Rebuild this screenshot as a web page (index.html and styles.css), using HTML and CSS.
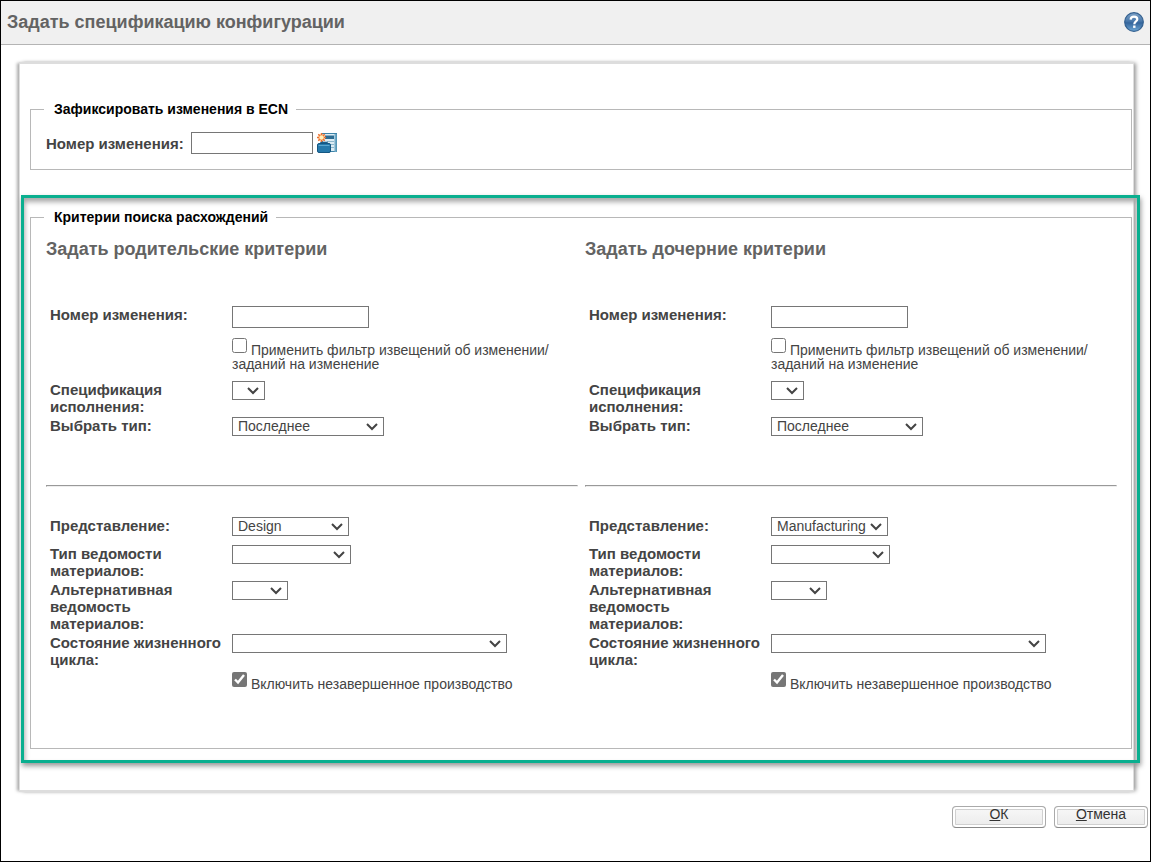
FILE: index.html
```html
<!DOCTYPE html>
<html lang="ru">
<head>
<meta charset="utf-8">
<title>Задать спецификацию конфигурации</title>
<link rel="stylesheet" href="styles.css">
</head>
<body>
<div class="dialog">
  <header class="titlebar">
    <h1 class="title">Задать спецификацию конфигурации</h1>
    <button class="icon-button" type="button" aria-label="Справка">
      <svg width="20" height="20" viewBox="0 0 20 20">
        <defs>
          <linearGradient id="ball" x1="0" y1="0" x2="0" y2="1">
            <stop offset="0" stop-color="#7fa3c8"/><stop offset=".45" stop-color="#4a79ab"/><stop offset=".55" stop-color="#34659c"/><stop offset="1" stop-color="#6fa8d6"/>
          </linearGradient>
        </defs>
        <circle cx="10" cy="10" r="9.3" fill="url(#ball)" stroke="#34608f" stroke-width="1.2"/>
        <path d="M6.6 7.6C6.7 5.500 8 4.700 10 4.700C12 4.700 13.300 5.700 13.300 7.300C13.300 9.500 10.300 9.300 10.300 12.200" fill="none" stroke="#fff" stroke-width="2.200"/>
        <rect x="9.100" y="13.500" width="2.400" height="2.400" fill="#fff"/>
      </svg>
    </button>
  </header>

  <main class="panel">
    <fieldset class="group group-ecn">
      <legend class="legend">Зафиксировать изменения в ECN</legend>
      <div class="ecn-row">
        <label class="label" for="ecn">Номер изменения:</label>
        <input class="text-box ecn-box" id="ecn" type="text">
        <button class="icon-button" type="button" aria-label="Создать извещение">
          <svg width="20" height="20" viewBox="0 0 20 20">
            <rect x="5.500" y="0.500" width="14" height="18" fill="#dcecf4" stroke="#3d83a8"/>
            <path d="M18.500 1v18" stroke="#6fa9c6" stroke-width="2"/>
            <rect x="8" y="2.500" width="9" height="3.500" fill="#2d6c92"/>
            <path d="M10 8.500h7M13 11.500h4M14 14.500h3" stroke="#8db7cc"/>
            <path d="M4 11V9.500h6V11" fill="none" stroke="#1c5f8c" stroke-width="1.500"/>
            <rect x="0.500" y="10.500" width="13" height="9" rx="1.500" fill="#2679ab" stroke="#155782"/>
            <path d="M1.500 12.500h11" stroke="#5ba6cf"/>
            <circle cx="4.500" cy="4.500" r="3.500" fill="#fbd2a8"/>
            <path d="M4.500 0v9M0 4.500h9M1.300 1.300l6.400 6.400M7.700 1.300L1.300 7.700" stroke="#ee6f2d" stroke-width="1.500"/>
            <circle cx="4.500" cy="4.500" r="2.200" fill="#fff0bc"/>
          </svg>
        </button>
      </div>
    </fieldset>

    <section class="highlight">
      <fieldset class="group group-criteria">
        <legend class="legend">Критерии поиска расхождений</legend>
        <div class="columns">
          <section class="column">
            <h2 class="heading">Задать родительские критерии</h2>
            <div class="fields fields-top">
              <label class="label" for="p-num">Номер изменения:</label>
              <div class="value"><input class="text-box" id="p-num" type="text"></div>
              <label class="check check-filter"><input class="tick" type="checkbox"> Применить фильтр извещений об изменении/<wbr>заданий на изменение</label>
              <label class="label" for="p-spec">Спецификация исполнения:</label>
              <div class="value"><select class="drop drop-xs" id="p-spec"><option></option></select></div>
              <label class="label" for="p-type">Выбрать тип:</label>
              <div class="value"><select class="drop drop-m" id="p-type"><option>Последнее</option></select></div>
            </div>
            <hr class="rule">
            <div class="fields">
              <label class="label label-view" for="p-view">Представление:</label>
              <div class="value"><select class="drop drop-view" id="p-view"><option>Design</option></select></div>
              <label class="label" for="p-bom">Тип ведомости материалов:</label>
              <div class="value"><select class="drop drop-s" id="p-bom"><option></option></select></div>
              <label class="label" for="p-alt">Альтернативная ведомость материалов:</label>
              <div class="value"><select class="drop drop-alt" id="p-alt"><option></option></select></div>
              <label class="label" for="p-state">Состояние жизненного цикла:</label>
              <div class="value"><select class="drop drop-l" id="p-state"><option></option></select></div>
              <label class="check"><input class="tick" type="checkbox" checked> Включить незавершенное производство</label>
            </div>
          </section>

          <section class="column">
            <h2 class="heading">Задать дочерние критерии</h2>
            <div class="fields fields-top">
              <label class="label" for="c-num">Номер изменения:</label>
              <div class="value"><input class="text-box" id="c-num" type="text"></div>
              <label class="check check-filter"><input class="tick" type="checkbox"> Применить фильтр извещений об изменении/<wbr>заданий на изменение</label>
              <label class="label" for="c-spec">Спецификация исполнения:</label>
              <div class="value"><select class="drop drop-xs" id="c-spec"><option></option></select></div>
              <label class="label" for="c-type">Выбрать тип:</label>
              <div class="value"><select class="drop drop-m" id="c-type"><option>Последнее</option></select></div>
            </div>
            <hr class="rule">
            <div class="fields">
              <label class="label label-view" for="c-view">Представление:</label>
              <div class="value"><select class="drop drop-view" id="c-view"><option>Manufacturing</option></select></div>
              <label class="label" for="c-bom">Тип ведомости материалов:</label>
              <div class="value"><select class="drop drop-s" id="c-bom"><option></option></select></div>
              <label class="label" for="c-alt">Альтернативная ведомость материалов:</label>
              <div class="value"><select class="drop drop-alt" id="c-alt"><option></option></select></div>
              <label class="label" for="c-state">Состояние жизненного цикла:</label>
              <div class="value"><select class="drop drop-l" id="c-state"><option></option></select></div>
              <label class="check"><input class="tick" type="checkbox" checked> Включить незавершенное производство</label>
            </div>
          </section>
        </div>
      </fieldset>
    </section>
  </main>

  <footer class="actions">
    <button class="push" type="button"><u>О</u>К</button>
    <button class="push" type="button"><u>О</u>тмена</button>
  </footer>
</div>
</body>
</html>
```

FILE: styles.css
```css
* { box-sizing: border-box; }

body {
  margin: 0;
  background: #fff;
  color: #444;
  font: 14px/14px "Liberation Sans", Arial, sans-serif;
}

.dialog {
  display: flex;
  flex-direction: column;
  min-height: 100vh;
  border: 1px solid #000;
}

.titlebar {
  display: flex;
  justify-content: space-between;
  align-items: center;
  padding: 11px 6px 12px;
  background: #f0f0f0;
  border-bottom: 1px solid #b4b4b4;
}

.title,
.heading {
  margin: 0;
  color: #636363;
  font-size: 18px;
  font-weight: bold;
  line-height: 20px;
}

.icon-button {
  display: block;
  padding: 0;
  border: 0;
  background: none;
}

.icon-button svg { display: block; }

.panel {
  margin: 17px 16px 0 18px;
  padding: 37px 0 27px;
  border: 2px solid #ddd;
  border-width: 2px 1px;
  box-shadow: -3px 0 3px -1px #aaa, 3px 0 4px -1px #999;
}

.group {
  min-width: 0;
  margin: 0;
  border: 1px solid #b8b8b8;
}

.group-ecn {
  margin: 0 1px 25px 10px;
  padding: 15px;
}

.legend {
  margin-left: -2px;
  padding: 0 8px 0 10px;
  color: #000;
  font-weight: bold;
  line-height: 16px;
}

.ecn-row {
  display: flex;
  align-items: center;
  gap: 4px;
}

.ecn-row .label { margin-right: 3px; }

.label {
  font-size: 15px;
  font-weight: bold;
  line-height: 17px;
}

.text-box {
  width: 137px;
  height: 22px;
  padding: 1px 4px;
  border: 1px solid #767676;
  background: #fff;
  color: inherit;
  font: inherit;
}

.ecn-box { width: 122px; }

.highlight {
  margin: 0 -7px 0 1px;
  padding: 11px 5px 11px 6px;
  border: 3px solid #0aaf8f;
  box-shadow: 1px 3px 5px #999, inset 1px 4px 5px #aaa;
}

.group-criteria { padding: 14px 14px 36px 15px; }

.columns {
  display: grid;
  grid-template-columns: 1fr 1fr;
  gap: 7px;
}

.fields {
  display: grid;
  grid-template-columns: 174px 1fr;
  align-items: start;
  gap: 2px 8px;
  padding-left: 4px;
}

.fields-top { padding-top: 47px; }

.label-view { min-height: 26px; }

.value { display: flex; }

.check {
  grid-column: 2;
  max-width: 320px;
  min-height: 42px;
  padding-top: 2px;
}

.check-filter {
  min-height: 49px;
  padding-top: 8px;
}

.tick {
  width: 15px;
  height: 15px;
  margin: 0;
  vertical-align: 2px;
  accent-color: #767676;
}

.drop {
  height: 19px;
  padding: 0 20px 1px 5px;
  border: 1px solid #767676;
  border-radius: 0;
  appearance: none;
  background: #fff url("data:image/svg+xml,%3Csvg xmlns='http://www.w3.org/2000/svg' width='12' height='8'%3E%3Cpath d='M1 1l5 5 5-5' fill='none' stroke='%23444' stroke-width='2'/%3E%3C/svg%3E") no-repeat right 5px center;
  color: inherit;
  font: inherit;
  line-height: 16px;
}

.drop-xs { width: 33px; }
.drop-alt { width: 56px; }
.drop-view { width: 117px; }
.drop-s { width: 119px; }
.drop-m { width: 152px; }
.drop-l { width: 275px; }

.rule {
  margin: 49px 0 30px;
  border: 1px solid;
  border-color: #999 #eee #eee #999;
}

.actions {
  display: flex;
  justify-content: flex-end;
  gap: 8px;
  padding: 14px 2px 0;
}

.push {
  width: 94px;
  height: 22px;
  padding: 0 0 6px;
  border: 1px solid #aaa;
  border-bottom-color: #888;
  border-radius: 4px;
  background: linear-gradient(#f8f8f8, #ebebeb);
  box-shadow: inset 0 0 0 2px #fff, inset 0 0 0 3px #d0d0d0;
  color: #333;
  font: inherit;
}
```
